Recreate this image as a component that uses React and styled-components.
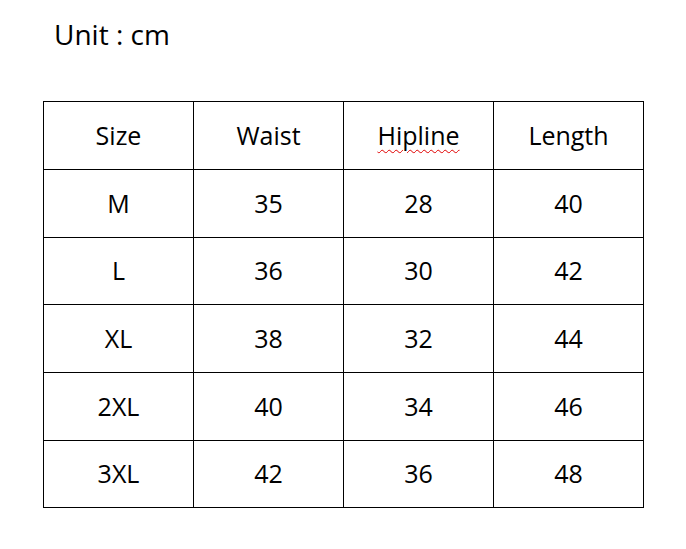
import React from "react";
import styled, { createGlobalStyle } from "styled-components";

const Global = createGlobalStyle`
  html, body { margin: 0; padding: 0; background: #fff; }
  body { font-family: "Open Sans", "Noto Sans", sans-serif; color: #000; }
`;

const Page = styled.div`
  width: 686px;
  height: 549px;
  padding: 15px 0 0 43px;
  box-sizing: border-box;
`;

const Unit = styled.div`
  font-size: 28px;
  line-height: 38px;
  margin-left: 11px;
  height: 86px;
`;

const Table = styled.table`
  border-collapse: collapse;
  table-layout: fixed;
  width: 601px;
`;

const Row = styled.tr`
  height: ${(p) => p.$h}px;
`;

const Cell = styled.td`
  border: 1px solid #000;
  padding: 0 0 2px;
  text-align: center;
  vertical-align: middle;
  font-size: 25px;
  line-height: 30px;
`;

const Misspelled = styled.span`
  text-decoration: underline wavy #e00000;
  text-decoration-thickness: 1px;
  text-underline-offset: 4px;
`;

const rows = [
  ["M", "35", "28", "40"],
  ["L", "36", "30", "42"],
  ["XL", "38", "32", "44"],
  ["2XL", "40", "34", "46"],
  ["3XL", "42", "36", "48"],
];
const heights = [68, 67, 68, 68, 67];

export default function App() {
  return (
    <>
      <Global />
      <Page>
        <Unit>Unit : cm</Unit>
        <Table>
          <tbody>
            <Row $h={68}>
              <Cell>Size</Cell>
              <Cell>Waist</Cell>
              <Cell>
                <Misspelled>Hipline</Misspelled>
              </Cell>
              <Cell>Length</Cell>
            </Row>
            {rows.map((r, i) => (
              <Row key={r[0]} $h={heights[i]}>
                {r.map((c, j) => (
                  <Cell key={j}>{c}</Cell>
                ))}
              </Row>
            ))}
          </tbody>
        </Table>
      </Page>
    </>
  );
}
